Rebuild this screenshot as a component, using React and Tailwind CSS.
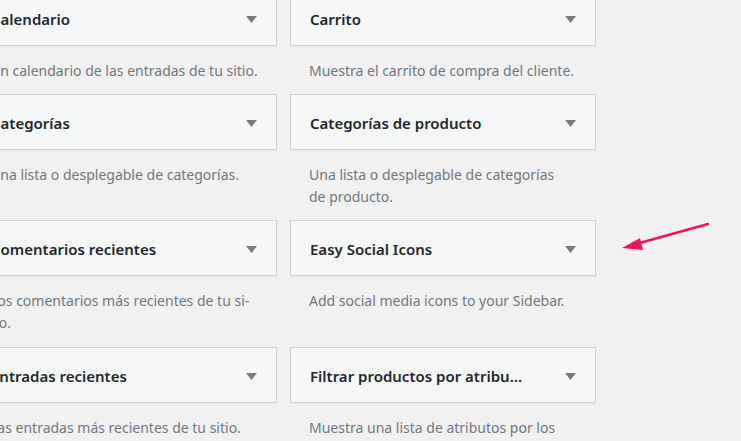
import React from "react";

const rows = [
  [
    { title: "Calendario", desc: ["Un calendario de las entradas de tu sitio."] },
    { title: "Carrito", desc: ["Muestra el carrito de compra del cliente."] },
  ],
  [
    { title: "Categorías", desc: ["Una lista o desplegable de categorías."] },
    {
      title: "Categorías de producto",
      desc: ["Una lista o desplegable de categorías", "de producto."],
    },
  ],
  [
    {
      title: "Comentarios recientes",
      desc: ["Los comentarios más recientes de tu si-", "tio."],
    },
    { title: "Easy Social Icons", desc: ["Add social media icons to your Sidebar."] },
  ],
  [
    { title: "Entradas recientes", desc: ["Las entradas más recientes de tu sitio."] },
    {
      title: "Filtrar productos por atribu...",
      desc: ["Muestra una lista de atributos por los", "que filtrar los productos."],
    },
  ],
];

const Caret = () => (
  <svg width="11" height="7" viewBox="0 0 11 7" className="mt-[2px] shrink-0">
    <path d="M0 0h11L5.5 7z" fill="#787c82" />
  </svg>
);

const Widget = ({ title, desc, last }) => (
  <div className="flex flex-col">
    <div className="h-[56px] flex items-center justify-between pl-[19px] pr-[19px] bg-[#f6f7f7] border border-[#cfd1d3] shadow-[0_1px_1px_rgba(0,0,0,0.04)]">
      <h3 className="mt-[3px] text-[15px] font-semibold text-[#23282d] whitespace-nowrap leading-[21px]">
        {title}
      </h3>
      <Caret />
    </div>
    <p className={`pt-[14px] ${last ? "pb-[13px]" : "pb-[12px]"} px-[19px] text-[14px] leading-[22px] text-[#72777c]`}>
      {desc.map((line, i) => (
        <React.Fragment key={i}>
          {i > 0 && <br />}
          {line}
        </React.Fragment>
      ))}
    </p>
  </div>
);

export default function App() {
  return (
    <div
      className="relative w-[741px] h-[441px] overflow-hidden bg-[#f1f1f1]"
      style={{ fontFamily: '"Segoe UI", "Noto Sans", sans-serif' }}
    >
      <div className="ml-[-29px] mt-[-10px] grid grid-cols-[306px_306px] gap-x-[13px] items-start">
        {rows.map((row, r) =>
          row.map((w, c) => <Widget key={`${r}-${c}`} last={r === 2} {...w} />)
        )}
      </div>

      {/* annotation arrow */}
      <svg
        className="absolute left-[615px] top-[216px]"
        width="100"
        height="40"
        viewBox="615 216 100 40"
      >
        <line x1="708" y1="224" x2="636" y2="244" stroke="#f2135f" strokeWidth="2.5" strokeLinecap="round" />
        <path d="M622 248L640 238L643 250z" fill="#f2135f" />
      </svg>
    </div>
  );
}
